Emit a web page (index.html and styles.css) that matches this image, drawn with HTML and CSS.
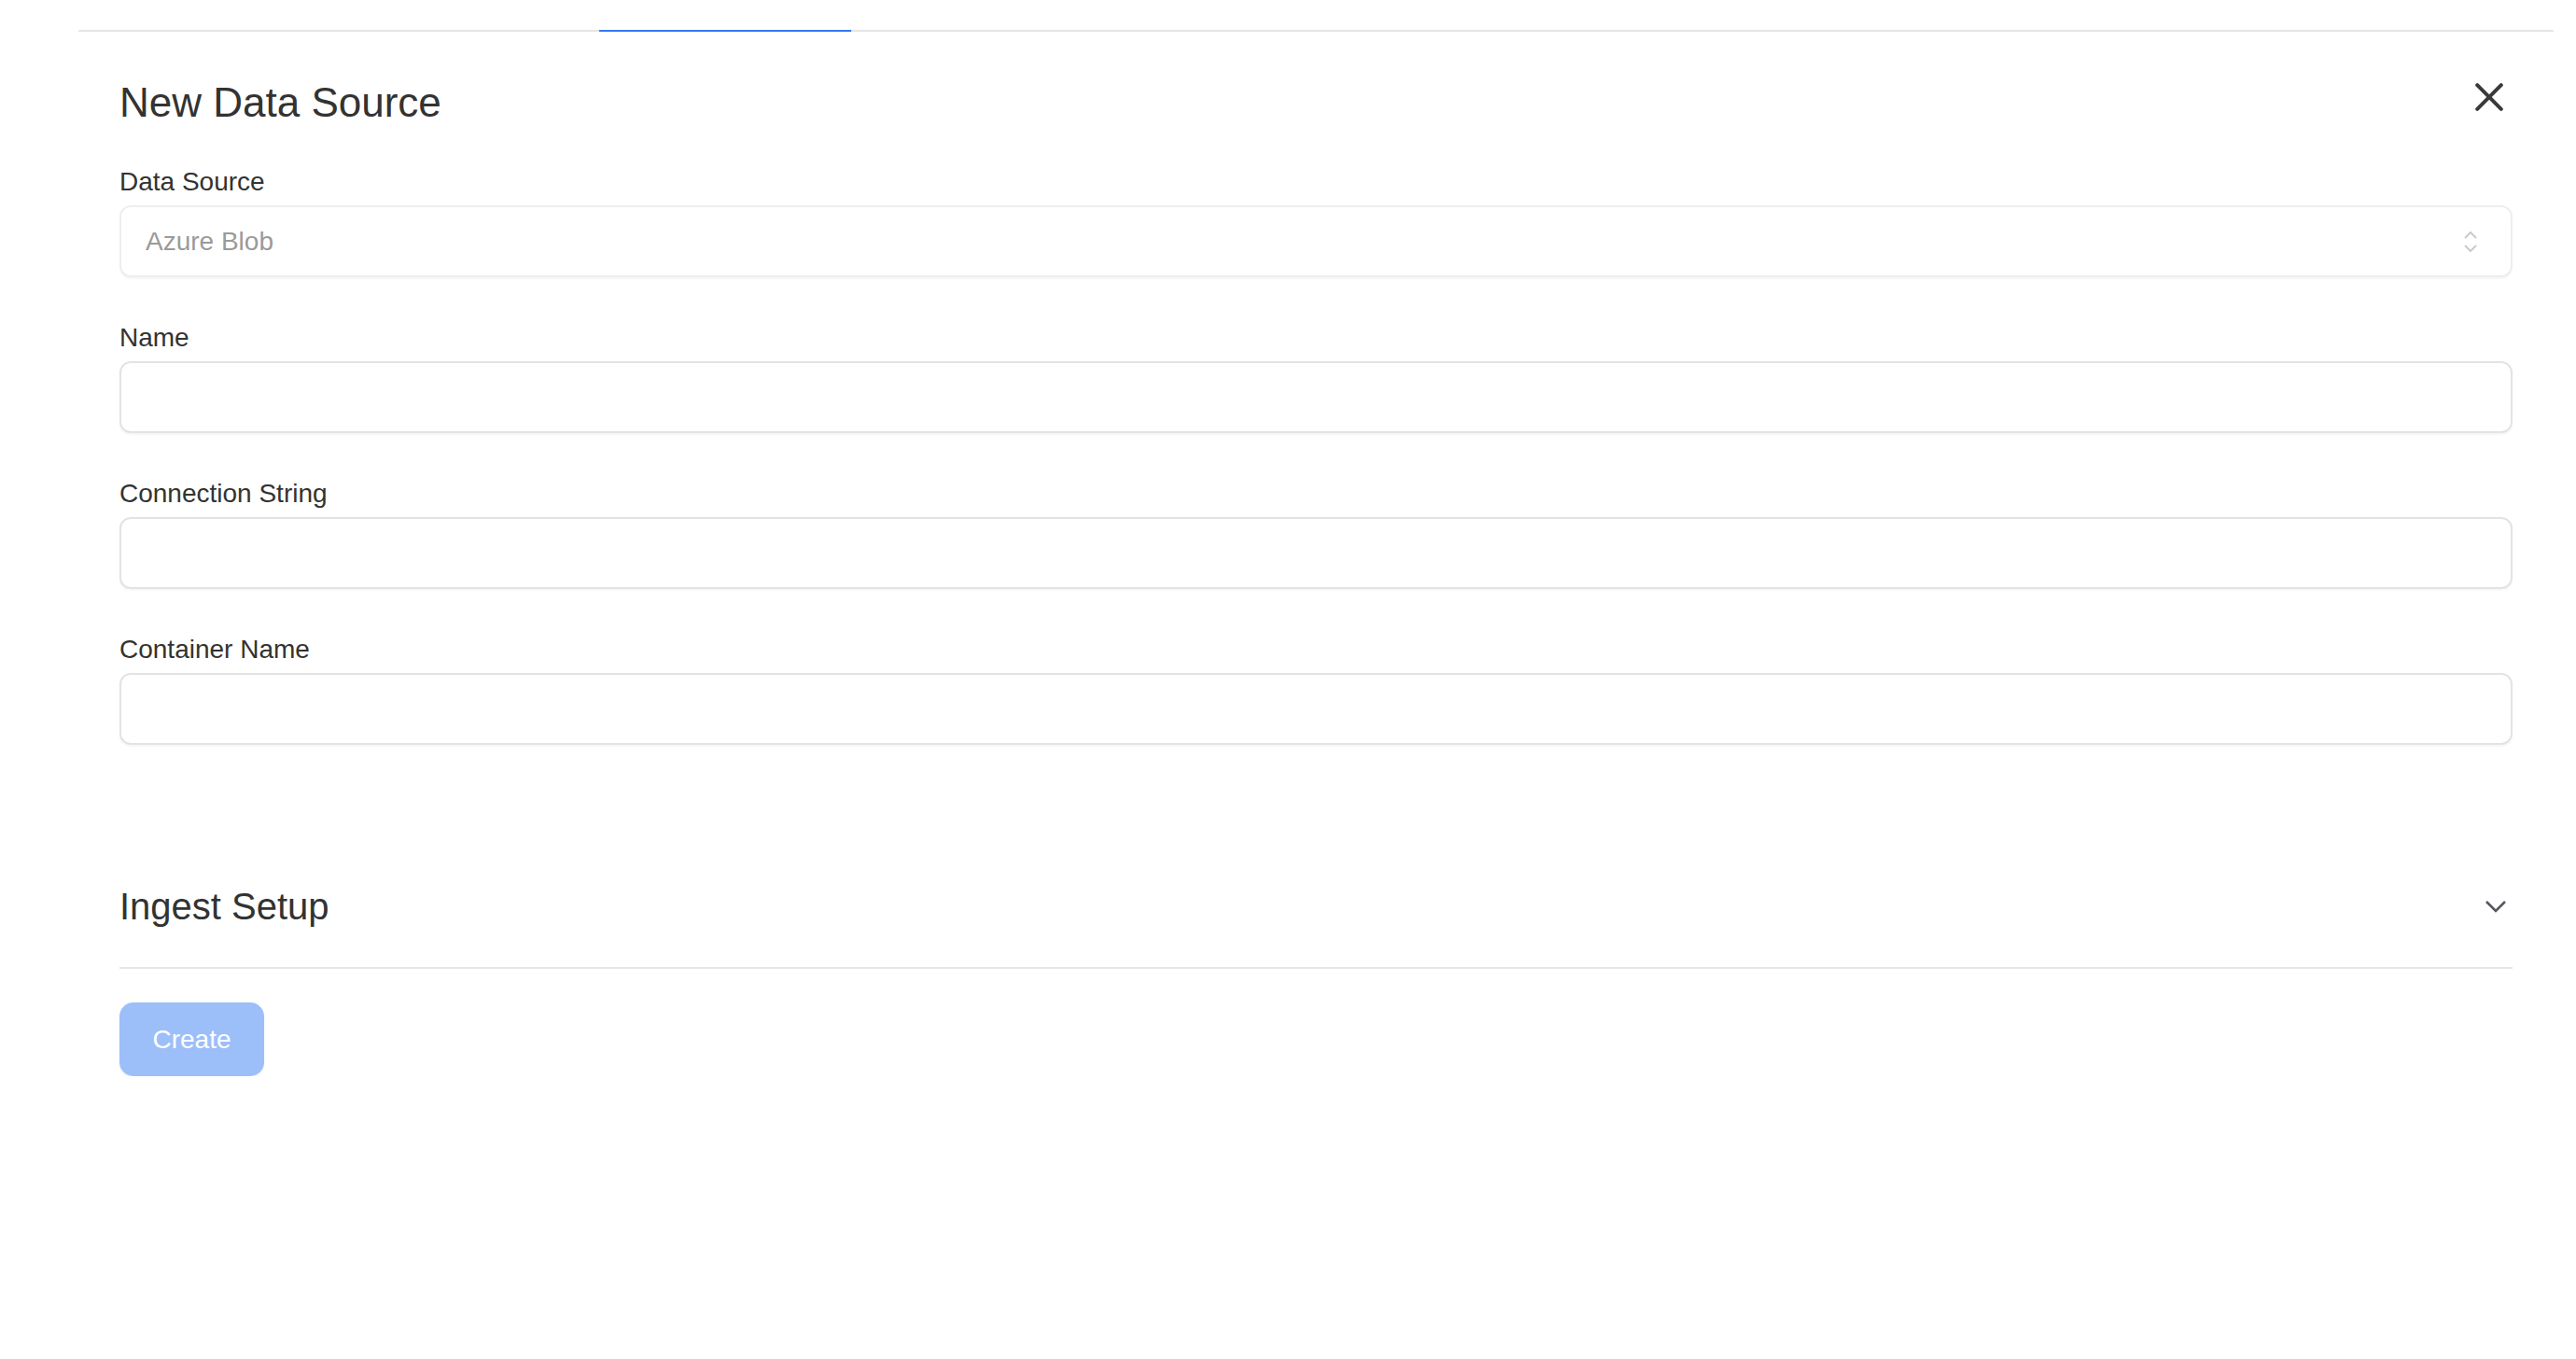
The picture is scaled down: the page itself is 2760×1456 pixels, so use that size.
FILE: index.html
```html
<!DOCTYPE html>
<html lang="en">
<head>
<meta charset="utf-8">
<title>New Data Source</title>
<link rel="stylesheet" href="styles.css">
</head>
<body>
<div class="page">
  <div class="tabs">
    <div class="tab"></div>
    <div class="tab tab-active"></div>
  </div>
  <div class="panel">
    <div class="panel-head">
      <h1 class="title">New Data Source</h1>
      <button class="close" type="button" aria-label="Close">
        <svg width="30" height="30" viewBox="0 0 30 30"><path d="M2.2 2.2 L27.8 27.8 M27.8 2.2 L2.2 27.8" fill="none" stroke="#3a3a38" stroke-width="4" stroke-linecap="round"/></svg>
      </button>
    </div>
    <form class="form">
      <div class="field">
        <label class="label">Data Source</label>
        <div class="select">
          <span class="select-value">Azure Blob</span>
          <svg class="select-arrows" width="14" height="22" viewBox="0 0 14 22"><polyline points="1,7 7,1 13,7" fill="none" stroke="#cacaca" stroke-width="2"/><polyline points="1,15 7,21 13,15" fill="none" stroke="#cacaca" stroke-width="2"/></svg>
        </div>
      </div>
      <div class="field">
        <label class="label">Name</label>
        <input class="input" type="text">
      </div>
      <div class="field">
        <label class="label">Connection String</label>
        <input class="input" type="text">
      </div>
      <div class="field">
        <label class="label">Container Name</label>
        <input class="input" type="text">
      </div>
    </form>
    <div class="section">
      <h2 class="section-title">Ingest Setup</h2>
      <svg class="section-chevron" width="24" height="14" viewBox="0 0 24 14"><polyline points="2,2 12,12 22,2" fill="none" stroke="#55565e" stroke-width="2.6"/></svg>
    </div>
    <button class="create" type="button">Create</button>
  </div>
</div>
</body>
</html>
```
FILE: styles.css
```css
* { box-sizing: border-box; }
html, body { margin: 0; padding: 0; background: #ffffff; }
body {
  font-family: "Liberation Sans", Arial, Helvetica, sans-serif;
  color: #353533;
}
.page {
  padding: 0 24px 0 84px;
}
.tabs {
  display: flex;
  height: 34px;
  border-bottom: 2px solid #e5e5e5;
}
.tab { width: 558px; }
.tab-active {
  width: 270px;
  border-bottom: 2px solid #3478f0;
  margin-bottom: -2px;
}
.panel {
  padding: 0 44px;
}
.panel-head {
  display: flex;
  justify-content: space-between;
  align-items: flex-start;
  padding-top: 50px;
}
.title {
  margin: 0;
  font-size: 44px;
  line-height: 52px;
  font-weight: 400;
  color: #333331;
}
.close {
  border: 0;
  background: none;
  padding: 0;
  margin: 5px 10px 0 0;
  width: 30px;
  height: 30px;
  cursor: pointer;
}
.close svg { display: block; }
.form {
  display: flex;
  flex-direction: column;
  gap: 44px;
  margin-top: 38px;
}
.field { display: flex; flex-direction: column; }
.label {
  font-size: 28px;
  line-height: 42px;
  margin-bottom: 4px;
  color: #333331;
}
.select {
  height: 77px;
  border: 2px solid #eeeeee;
  border-radius: 12px;
  box-shadow: 0 2px 2px rgba(0,0,0,0.04);
  display: flex;
  align-items: center;
  justify-content: space-between;
  padding: 0 36px 0 26px;
}
.select-value {
  font-size: 28px;
  color: #9a9a9a;
}
.select-arrows { display: block; }
.input {
  display: block;
  width: 100%;
  height: 77px;
  border: 2px solid #e3e3e3;
  border-radius: 12px;
  box-shadow: 0 2px 2px rgba(0,0,0,0.04);
  background: #fff;
  font: inherit;
  font-size: 28px;
  padding: 0 26px;
  outline: none;
}
.section {
  margin-top: 149px;
  padding-bottom: 41px;
  border-bottom: 2px solid #e6e6e6;
  display: flex;
  justify-content: space-between;
  align-items: center;
}
.section-title {
  margin: 0;
  font-size: 40px;
  line-height: 48px;
  font-weight: 400;
  color: #333331;
}
.section-chevron { display: block; margin-right: 6px; }
.create {
  margin-top: 36px;
  width: 155px;
  height: 79px;
  border: 0;
  border-radius: 15px;
  background: #9cbff9;
  color: #ffffff;
  font-family: "Liberation Sans", Arial, Helvetica, sans-serif;
  font-size: 28px;
  padding: 0;
  box-shadow: 0 2px 3px rgba(0,0,0,0.05);
  cursor: default;
}
```
